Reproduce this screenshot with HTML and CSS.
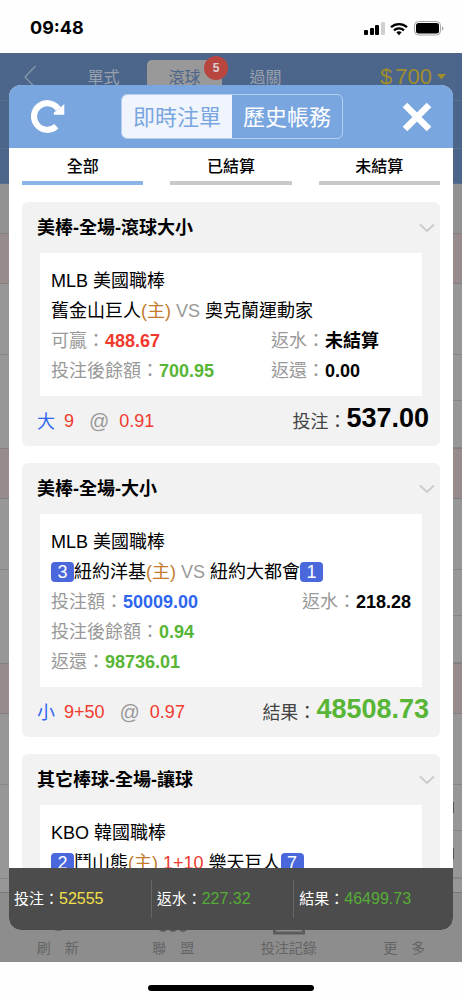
FILE: index.html
```html
<!DOCTYPE html>
<html lang="zh-Hant">
<head>
<meta charset="utf-8">
<meta name="viewport" content="width=device-width, initial-scale=1">
<title>即時注單</title>
<link rel="stylesheet" href="styles.css">
</head>
<body>
<div class="screen">
  <div class="status">
    <span class="clock">09:48</span>
    <svg class="status-icons" width="80" height="18" viewBox="0 0 80 18" aria-hidden="true">
      <rect x="0" y="11" width="4" height="5" rx="1"/>
      <rect x="6" y="9" width="4" height="7" rx="1"/>
      <rect x="11" y="6" width="4" height="10" rx="1"/>
      <rect x="17" y="3" width="4" height="13" rx="1" fill="#d0d0d0"/>
      <path d="M27 8.200a12 12 0 0 1 16 0M30 11.300a7.500 7.500 0 0 1 10 0" fill="none" stroke="#000" stroke-width="2.400"/>
      <path d="M32.300 13.300a4.200 4.200 0 0 1 5.400 0L35 16.200z"/>
      <rect x="50.500" y="2.500" width="26" height="13.500" rx="4" fill="none" stroke="#a5a5a5"/>
      <rect x="52" y="4" width="23" height="10.500" rx="2.500"/>
      <path d="M78 7.500c2 .6 2 3.400 0 4z" fill="#a5a5a5"/>
    </svg>
  </div>

  <div class="app">
    <div class="page">
      <header class="page-head">
        <nav class="modes">
          <a class="back" href="#" aria-label="返回"><svg width="14" height="24" viewBox="0 0 14 24"><path d="M12.500 1L2 12l10.500 11" fill="none" stroke="#8796ac" stroke-width="1.300"/></svg></a>
          <a class="mode" href="#">單式</a>
          <a class="mode mode-on" href="#">滾球<span class="count">5</span></a>
          <a class="mode" href="#">過關</a>
          <button class="wallet"><span>$</span><span>700</span><svg width="10" height="6" viewBox="0 0 10 6"><path d="M0 0h9L4.500 5.500z" fill="#a08e2c"/></svg></button>
        </nav>
        <div class="strip"></div>
        <div class="strip strip-low"></div>
      </header>
      <div class="odds">
        <div class="row-top"></div>
        <div class="league"></div>
        <div class="row-teams"></div>
        <div class="row-odds"><i></i><i></i><i></i></div>
        <div class="league"></div>
        <div class="row-teams"></div>
        <div class="row-odds"><i></i><i></i><i></i></div>
        <div class="league"></div>
        <div class="row-teams"></div>
        <div class="row-odds row-priced"><i></i><i></i><i></i></div>
      </div>
      <nav class="tabbar">
        <a href="#"><svg width="32" height="30" viewBox="0 0 32 30"><path d="M26 16a10 10 0 1 1-2-8" fill="none" stroke="#555" stroke-width="3"/></svg>刷　新</a>
        <a href="#"><svg width="32" height="30" viewBox="0 0 32 30"><g fill="none" stroke="#5c5c5c" stroke-width="2"><circle cx="6" cy="22" r="4"/><circle cx="16" cy="22" r="4"/><circle cx="26" cy="22" r="4"/></g></svg>聯　盟</a>
        <a href="#"><svg width="32" height="30" viewBox="0 0 32 30"><rect x="1.500" y="2" width="29" height="26" fill="none" stroke="#5c5c5c" stroke-width="3"/></svg>投注記錄</a>
        <a href="#"><svg width="32" height="30" viewBox="0 0 32 30"><path d="M4 6h24M4 13h24M4 20h24" stroke="#5c5c5c" stroke-width="3"/></svg>更　多</a>
      </nav>
    </div>

    <section class="modal" role="dialog" aria-label="即時注單">
      <header class="modal-head">
        <button class="icon-btn" aria-label="重新整理"><svg width="34" height="34" viewBox="0 0 34 34"><path d="M25.300 26.300A13.300 13.300 0 1 1 27.500 9.300" fill="none" stroke="#fff" stroke-width="6.200"/><path d="M33.300 4V14.700H22.800V12.500L28 9z" fill="#fff"/></svg></button>
        <div class="segment">
          <button class="seg seg-on">即時注單</button>
          <button class="seg">歷史帳務</button>
        </div>
        <button class="icon-btn" aria-label="關閉"><svg width="30" height="30" viewBox="0 0 30 30"><path d="M3 3l24 24M27 3L3 27" stroke="#fff" stroke-width="6.500"/></svg></button>
      </header>

      <div class="filters">
        <button class="filter filter-on">全部</button>
        <button class="filter">已結算</button>
        <button class="filter">未結算</button>
      </div>

      <div class="bets">
        <article class="bet">
          <h2 class="bet-title">美棒-全場-滾球大小<svg width="16" height="10" viewBox="0 0 16 10"><path d="M1 1.500l7 6.500 7-6.500" fill="none" stroke="#ccc" stroke-width="2"/></svg></h2>
          <div class="detail">
            <div>MLB 美國職棒</div>
            <div>舊金山巨人<span class="home">(主)</span> <span class="muted">VS</span> 奧克蘭運動家</div>
            <div class="pair"><span><span class="muted">可贏：</span><b class="red">488.67</b></span><span class="second"><span class="muted">返水：</span><b>未結算</b></span></div>
            <div class="pair"><span><span class="muted">投注後餘額：</span><b class="green">700.95</b></span><span class="second"><span class="muted">返還：</span><b>0.00</b></span></div>
          </div>
          <div class="bet-foot">
            <span class="pick">大</span><span class="line red">9</span><span class="at">@</span><span class="red">0.91</span>
            <span class="total">投注：<b>537.00</b></span>
          </div>
        </article>

        <article class="bet">
          <h2 class="bet-title">美棒-全場-大小<svg width="16" height="10" viewBox="0 0 16 10"><path d="M1 1.500l7 6.500 7-6.500" fill="none" stroke="#ccc" stroke-width="2"/></svg></h2>
          <div class="detail">
            <div>MLB 美國職棒</div>
            <div><span class="score">3</span>紐約洋基<span class="home">(主)</span> <span class="muted">VS</span> 紐約大都會<span class="score">1</span></div>
            <div class="pair"><span><span class="muted">投注額：</span><b class="blue">50009.00</b></span><span><span class="muted">返水：</span><b>218.28</b></span></div>
            <div><span class="muted">投注後餘額：</span><b class="green">0.94</b></div>
            <div><span class="muted">返還：</span><b class="green">98736.01</b></div>
          </div>
          <div class="bet-foot">
            <span class="pick">小</span><span class="line red">9+50</span><span class="at">@</span><span class="red">0.97</span>
            <span class="total">結果：<b class="green">48508.73</b></span>
          </div>
        </article>

        <article class="bet">
          <h2 class="bet-title">其它棒球-全場-讓球<svg width="16" height="10" viewBox="0 0 16 10"><path d="M1 1.500l7 6.500 7-6.500" fill="none" stroke="#ccc" stroke-width="2"/></svg></h2>
          <div class="detail">
            <div>KBO 韓國職棒</div>
            <div><span class="score">2</span>鬥山熊<span class="home">(主)</span> <span class="red">1+10</span> 樂天巨人<span class="score">7</span></div>
          </div>
        </article>
      </div>

      <footer class="sums">
        <div class="sum">投注：<span class="yellow">52555</span></div>
        <div class="sum">返水：<span class="lime">227.32</span></div>
        <div class="sum sum-wide">結果：<span class="lime">46499.73</span></div>
      </footer>
    </section>
  </div>

  <div class="home-area"><div class="home-bar"></div></div>
</div>
</body>
</html>
```
FILE: styles.css
```css
* { box-sizing: border-box; }
body {
  margin: 0;
  background: #fefefe;
  color: #000;
  font-family: "Liberation Sans", "Noto Sans CJK TC", sans-serif;
  font-size: 18px;
}
button {
  margin: 0;
  padding: 0;
  border: 0;
  background: none;
  color: inherit;
  font: inherit;
}
a { color: inherit; text-decoration: none; }
svg { display: block; flex: none; }

.screen { display: flex; flex-direction: column; height: 100vh; }
.status {
  display: flex;
  align-items: center;
  justify-content: space-between;
  flex: none;
  height: 53px;
  padding: 2px 18px 0 30px;
}
.clock { font: 700 18px/24px Inter, sans-serif; }

.app { position: relative; flex: 1; min-height: 0; }
.page { display: flex; flex-direction: column; height: 100%; overflow: hidden; background: #979797; }

/* dimmed page under the dialog */
.page-head { flex: none; background: #4b658b; }
.modes { display: flex; height: 48px; padding: 7px 15px 0 23px; border-bottom: 1px solid #57708f; }
.back { width: 43px; padding-top: 5px; }
.mode {
  position: relative;
  width: 75px;
  margin-right: 6px;
  padding-top: 6px;
  color: #9aa1ac;
  font-size: 16px;
  line-height: 24px;
  text-align: center;
}
.mode-on { border-radius: 5px 5px 0 0; background: #999; color: #4b658b; }
.count {
  position: absolute;
  top: -4px;
  right: -6px;
  width: 24px;
  height: 24px;
  border-radius: 50%;
  background: #b8463f;
  color: #d8d0d0;
  font-size: 12px;
  font-weight: 700;
}
.wallet {
  display: flex;
  align-items: center;
  gap: 3px;
  height: 33px;
  margin-left: auto;
  color: #a08e2c;
  font-size: 22px;
}
.wallet svg { margin-left: 2px; }
.strip { height: 48px; border-bottom: 1px solid #57708f; }
.strip-low { height: 35px; }

.odds { flex: 1; min-height: 0; overflow: hidden; }
.row-top { height: 49px; background: #929292; }
.league { height: 51px; border: 1px solid #858080; border-width: 1px 0; background: #978b8b; }
.row-teams { height: 71px; border-bottom: 1px solid #868686; }
.row-odds { display: grid; grid-template-columns: 1fr 1fr; grid-template-rows: 46px 47px; }
.row-odds i { border-bottom: 1px solid #868686; }
.row-odds i:first-child { grid-row: span 2; border: 0; }
.row-priced { border-bottom: 1px solid #868686; }
.row-priced i + i::after {
  content: "";
  display: block;
  width: 2px;
  height: 11px;
  margin: 17px 8px 0 auto;
  background: #555;
}
.tabbar {
  display: grid;
  grid-template-columns: repeat(4, 1fr);
  flex: none;
  height: 70px;
  padding-top: 12px;
  border-top: 1px solid #777;
  background: #8d8d8d;
  color: #646464;
  font-size: 14px;
  line-height: 26px;
}
.tabbar a { display: flex; flex-direction: column; align-items: center; }

/* dialog */
.modal {
  position: absolute;
  inset: 32px 9px 32px 9px;
  display: flex;
  flex-direction: column;
  overflow: hidden;
  border-radius: 12px;
  background: #fff;
}
.modal-head {
  display: flex;
  align-items: center;
  justify-content: space-between;
  flex: none;
  height: 63px;
  padding: 0 21px;
  background: #79a6df;
}
.icon-btn { display: flex; width: 34px; }
.icon-btn:last-child { justify-content: flex-end; width: 30px; }
.segment {
  display: flex;
  overflow: hidden;
  height: 45px;
  border: 1px solid #b6cfef;
  border-radius: 6px;
}
.seg { width: 110px; padding-bottom: 3px; color: #fff; font-size: 22px; }
.seg-on { background: #f0f5fd; color: #79a6df; }
.modal-head { padding-left: 22px; }
.segment { margin-right: 3px; }

.filters { display: flex; flex: none; gap: 27px; padding: 0 13px; }
.filter {
  flex: 1;
  height: 37px;
  border-bottom: 4px solid #c9c9c9;
  font-size: 16px;
  font-weight: 500;
}
.filter-on { border-color: #8db4e8; }

.bets {
  display: flex;
  flex: 1;
  flex-direction: column;
  gap: 17px;
  min-height: 0;
  padding: 17px 13px 0;
  overflow: hidden;
}
.bet { flex: none; border-radius: 6px; background: #f2f2f2; }
.bet-title {
  display: flex;
  align-items: center;
  justify-content: space-between;
  height: 51px;
  margin: 0;
  padding: 0 5px 4px 15px;
  font-size: 18px;
  font-weight: 700;
}
.bet-title svg { margin-top: 4px; }
.detail {
  margin: 0 18px;
  padding: 13px 11px 10px;
  background: #fff;
  line-height: 30px;
}
.detail > div { height: 30px; white-space: nowrap; }
.pair { display: flex; justify-content: space-between; }
.second { width: 140px; }
.muted { color: #999; }
.home { color: #c27a2c; }
.red { color: #f03a2e; }
.green { color: #58b535; }
.blue { color: #2f66f0; }
.score {
  display: inline-block;
  width: 23px;
  border-radius: 4px;
  background: #4a67dc;
  color: #fff;
  line-height: 20px;
  text-align: center;
}
.bet-foot {
  display: flex;
  align-items: center;
  height: 50px;
  padding: 0 11px 0 15px;
}
.pick { width: 27px; padding-bottom: 3px; color: #2f66f0; }
.at { margin: 0 10px 0 15px; color: #999; font-size: 20px; }
.total { display: flex; align-items: center; margin-left: auto; padding-bottom: 3px; color: #444; }
.total b { padding-bottom: 4px; color: #000; font-size: 27px; line-height: 46px; }
.total .green { color: #58b535; }

.sums {
  display: flex;
  align-items: center;
  flex: none;
  height: 62px;
  background: #4c4c4c;
  color: #fff;
  font-size: 15px;
}
.sum { flex: 8; padding-left: 5px; border-right: 1px solid #666; line-height: 38px; white-space: nowrap; }
.sum-wide { flex: 9; border: 0; }
.sum span { font-size: 16px; }
.yellow { color: #f2e04a; }
.lime { color: #55ad35; }

.home-area { display: flex; justify-content: center; flex: none; height: 38px; padding-top: 23px; }
.home-bar { width: 36%; height: 6px; border-radius: 3px; background: #000; }
```
